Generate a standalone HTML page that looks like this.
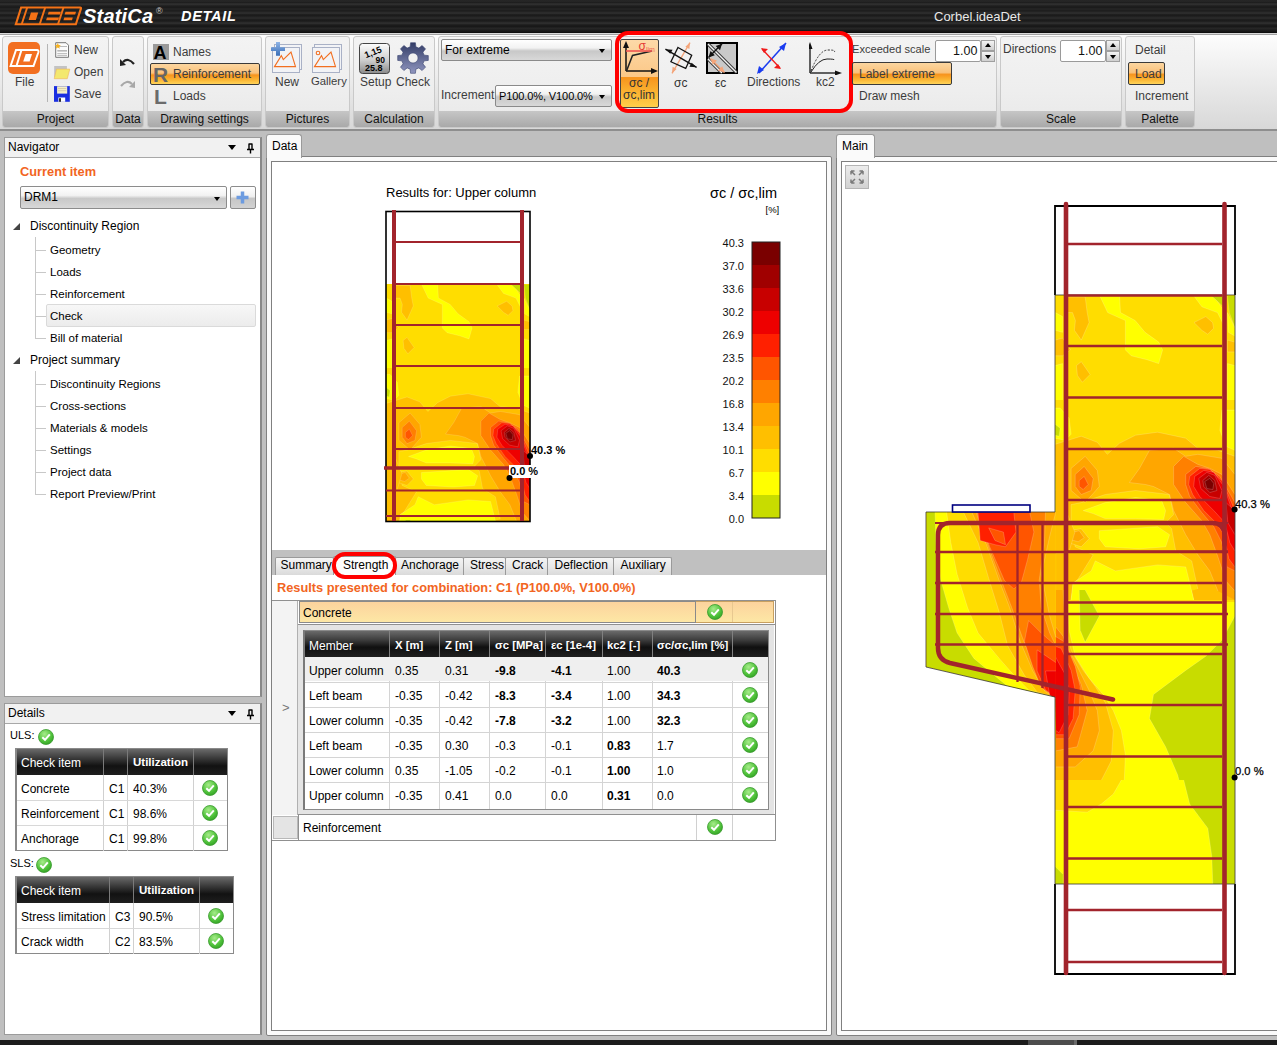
<!DOCTYPE html>
<html><head><meta charset="utf-8">
<style>
*{box-sizing:border-box;margin:0;padding:0}
html,body{width:1277px;height:1045px;overflow:hidden;background:#bfbfbf;font-family:"Liberation Sans",sans-serif;font-size:12px;color:#000}
.a{position:absolute}
.t{position:absolute;white-space:nowrap;line-height:1}
#title{left:0;top:0;width:1277px;height:33px;background:linear-gradient(180deg,#1d1d1d 0px,#2e2e2e 1px,#1b1b1b 2px,#222222 3px,#343434 4px,#1e1e1e 6px,#1a1a1a 8px,#2a2a2a 9px,#1c1c1c 10px,#242424 12px,#323232 13px,#181818 15px,#232323 17px,#2d2d2d 18px,#191919 20px,#222222 22px,#333333 23px,#1b1b1b 25px,#171717 27px,#282828 28px,#1d1d1d 30px,#121212 32px,#080808 33px)}
#ribbon{left:0;top:33px;width:1277px;height:98px;background:linear-gradient(180deg,#fdfdfd 0%,#f0f0f0 35%,#d8d8d8 100%);border-top:1px solid #d8d8d8;border-bottom:2px solid #8e8e8e}
.grp{position:absolute;top:2px;height:92px;border:1px solid #c9c9c9;border-radius:3px;background:linear-gradient(180deg,#f3f3f3 0%,#eeeeee 60%,#e8e8e8 100%);overflow:hidden}
.grp .lab{position:absolute;left:0;right:0;bottom:0;height:16px;background:linear-gradient(180deg,#c6c6c6,#a9a9a9);text-align:center;font-size:12px;line-height:16px;color:#111}
.rt{position:absolute;white-space:nowrap;font-size:12px;color:#3c3c3c;line-height:1}
.obtn{position:absolute;border:1px solid #3a3a3a;border-radius:2px;background:linear-gradient(180deg,#fcd6a0 0%,#f9c27c 45%,#f7941d 55%,#fbb634 80%,#ffd45a 100%)}
.combo{position:absolute;border:1px solid #8a8a8a;border-radius:2px;background:linear-gradient(180deg,#fff 0%,#f2f2f2 40%,#c8c8c8 55%,#d8d8d8 100%)}
.combo:after{content:"";position:absolute;right:6px;top:50%;margin-top:-1px;border-left:3.5px solid transparent;border-right:3.5px solid transparent;border-top:4px solid #000}
.spin{position:absolute;border:1px solid #9a9a9a;border-radius:2px;background:#fff}
.sbt{position:absolute;border:1px solid #a0a0a0;background:linear-gradient(180deg,#f4f4f4,#cfcfcf)}
</style></head><body>
<div id="title" class="a"></div>
<!-- logo -->
<svg class="a" style="left:10px;top:3px" width="80" height="27" viewBox="0 0 80 27"><g fill="#f47216">
<path d="M4.4 22.2 L10.4 3.6 H70.2 Q72.6 3.6 71.9 6.2 L66.6 22.2 Z M7.3 20.2 H65.1 L69.8 5.6 H11.9 Z"/>
<path d="M16.2 4.5 h2 l-5.6 17 h-2 z"/>
<path d="M34.2 4.5 h2 l-5.6 17 h-2 z"/>
<path d="M52.5 4.5 h2 l-5.6 17 h-2 z"/>
<path d="M21 9.4 H28.2 L25.9 16.9 H18.6 Z"/>
<path d="M38.7 8.7 H50.8 L50 11.5 H37.8 Z"/>
<path d="M37 14.4 H49 L48.2 17.2 H36.1 Z"/>
<path d="M55.5 8.7 H66 L65.2 11.5 H54.6 Z"/>
<path d="M54.3 14.4 H62.8 L62 17.2 H53.4 Z"/>
</g></svg>
<div class="t" style="left:83px;top:6px;font-size:20px;font-weight:bold;font-style:italic;color:#fff;letter-spacing:0.2px">StatiCa</div>
<div class="t" style="left:156px;top:7px;font-size:9px;color:#ccc">&#174;</div>
<div class="t" style="left:181px;top:9px;font-size:14.5px;font-weight:bold;font-style:italic;color:#fff;letter-spacing:0.7px">DETAIL</div>
<div class="t" style="left:934px;top:10px;font-size:13px;color:#e8e8e8">Corbel.ideaDet</div>

<div id="ribbon" class="a"><div class="a" style="left:0;top:0;width:1277px;height:1px;background:#a2a2a2"></div>
 <div class="grp" style="left:2px;width:107px"><div class="lab">Project</div></div>
 <div class="grp" style="left:112px;width:32px"><div class="lab">Data</div></div>
 <div class="grp" style="left:147px;width:115px"><div class="lab">Drawing settings</div></div>
 <div class="grp" style="left:265px;width:85px"><div class="lab">Pictures</div></div>
 <div class="grp" style="left:353px;width:82px"><div class="lab">Calculation</div></div>
 <div class="grp" style="left:438px;width:559px"><div class="lab">Results</div></div>
 <div class="grp" style="left:1000px;width:122px"><div class="lab">Scale</div></div>
 <div class="grp" style="left:1125px;width:70px"><div class="lab">Palette</div></div>
</div>
<!-- RIBBON CONTENT -->
<div id="rc">
 <!-- Project -->
 <svg class="a" style="left:8px;top:42px" width="32" height="32" viewBox="0 0 32 32"><rect x="0" y="0" width="32" height="32" rx="5" fill="#f26f21"/>
 <path d="M2.6 24 L8 8 H29 Q31 8 30.3 10.5 L25.5 24 Z" fill="none" stroke="#fff" stroke-width="2"/><path d="M13.3 8.5 L8.6 23.5" stroke="#fff" stroke-width="2"/><path d="M17.7 12.1 H24 L21.6 19.5 H15.2 Z" fill="#fff"/></svg>
 <div class="rt" style="left:15px;top:76px">File</div>
 <div class="a" style="left:47px;top:44px;width:1px;height:58px;background:#b5b5b5"></div>
 
 <svg class="a" style="left:48px;top:38px" width="25" height="66" viewBox="48 38 25 66">
 <path d="M55.7 42.7 H66 L68.5 45.2 V57.3 H55.7 Z" fill="#fbfbfb" stroke="#777" stroke-width="1"/>
 <path d="M57.3 46.5 H67 M57.3 53.6 H67 M57.3 55.4 H67" stroke="#aaa" stroke-width="0.8"/><path d="M57.3 50.8 H67" stroke="#b8b8b8" stroke-width="1.6"/>
 <path d="M57.8 43 l0.9 2 2.2 0.2 -1.7 1.4 0.6 2.2 -2 -1.2 -2 1.2 0.6 -2.2 -1.7 -1.4 2.2 -0.2z" fill="#f7b21f"/>
 <rect x="54.2" y="66" width="12.7" height="11" fill="#c3c3c3"/>
 <path d="M56.5 69.1 H69.8 L67.3 78.7 H54.2 Z" fill="#f3e86e" stroke="#f0b45a" stroke-width="0.6"/>
 <rect x="54" y="86.1" width="15.8" height="15.7" fill="#1a2ee0"/>
 <rect x="57.1" y="86.3" width="10.1" height="7.3" fill="#f5efc8"/><path d="M58 88.5 H66.3 M58 90.7 H66.3" stroke="#c8c0a0" stroke-width="0.7"/>
 <rect x="58.4" y="97.5" width="6.8" height="4.3" fill="#fff"/><rect x="59.2" y="98.2" width="1.6" height="3.6" fill="#000"/>
</svg>
 <div class="rt" style="left:74px;top:44px">New</div>
 
 <div class="rt" style="left:74px;top:66px">Open</div>
 
 <div class="rt" style="left:74px;top:88px">Save</div>
 <!-- Data -->
 <svg class="a" style="left:119px;top:55px" width="17" height="36" viewBox="0 0 17 36"><path d="M4 7 q5 -5 11 2" fill="none" stroke="#222" stroke-width="2.2"/><path d="M1 4 l0 7 6 -1z" fill="#222"/><path d="M13 29 q-5 -5 -11 2" fill="none" stroke="#a8a8a8" stroke-width="2.2"/><path d="M16 26 l0 7 -6 -1z" fill="#a8a8a8"/></svg>
 <!-- Drawing settings -->
 <div class="a" style="left:153px;top:44px;width:16px;height:16px;background:#9a9a9a"></div>
 <div class="t" style="left:153.5px;top:44px;font-size:18px;font-weight:bold;color:#000">A</div>
 <div class="rt" style="left:173px;top:46px">Names</div>
 <div class="obtn" style="left:150px;top:63px;width:110px;height:22px"></div>
 <div class="t" style="left:153px;top:64px;font-size:21px;font-weight:bold;color:#666">R</div>
 <div class="rt" style="left:173px;top:68px">Reinforcement</div>
 <div class="t" style="left:154px;top:86px;font-size:21px;font-weight:bold;color:#6b6b6b">L</div>
 <div class="rt" style="left:173px;top:90px">Loads</div>
 <!-- Pictures -->
 <svg class="a" style="left:265px;top:36px" width="85" height="40" viewBox="265 36 85 40">
 <g fill="#f2f3f6" stroke="#a9b1c6" stroke-width="1"><rect x="274.5" y="44.5" width="27" height="25"/><rect x="272.5" y="47.5" width="27" height="25"/><rect x="314.5" y="44.5" width="27" height="25"/><rect x="312.5" y="47.5" width="27" height="25"/></g>
 <g fill="none" stroke="#f26f21" stroke-width="1.1"><path d="M274.5 66.6 L281.3 55.6 L283.3 59.6 L291 52 L295.5 66.6 Z"/><path d="M314.5 66.6 L321.5 55.6 L323.3 59.6 L331 52 L335.5 66.6 Z"/><circle cx="318" cy="53" r="1.8"/></g>
 <defs><linearGradient id="pg" x1="0" y1="0" x2="0" y2="1"><stop offset="0" stop-color="#8fb4e6"/><stop offset="1" stop-color="#3a6fb8"/></linearGradient></defs>
 <path d="M276 42 h4 v5.3 h5 v3.6 h-5 v4.8 h-4 v-4.8 h-5 v-3.6 h5 z" fill="url(#pg)"/>
</svg>
 <div class="rt" style="left:275px;top:76px">New</div>
 
 <div class="rt" style="left:311px;top:76px;font-size:11.3px">Gallery</div>
 <!-- Calculation -->
 <svg class="a" style="left:359px;top:43px" width="31" height="31" viewBox="0 0 31 31"><defs><linearGradient id="sg" x1="0" y1="0" x2="0" y2="1"><stop offset="0" stop-color="#fdfdfd"/><stop offset="0.55" stop-color="#cfcfcf"/><stop offset="1" stop-color="#8a8a8a"/></linearGradient></defs><rect x="0.5" y="0.5" width="30" height="30" rx="3" fill="url(#sg)" stroke="#444"/>
 <g font-family="Liberation Sans" font-weight="bold" fill="#000"><text x="6" y="14" font-size="9" transform="rotate(-22 10 12)">1,15</text><text x="16.5" y="20" font-size="8.5">90</text><text x="6" y="28" font-size="9">25.8</text></g></svg>
 <div class="rt" style="left:360px;top:76px">Setup</div>
 <svg class="a" style="left:397px;top:42px" width="32" height="32" viewBox="-16 -16 32 32"><defs><linearGradient id="gg" x1="0" y1="0" x2="0" y2="1"><stop offset="0" stop-color="#323c66"/><stop offset="1" stop-color="#9096bf"/></linearGradient></defs>
 <path fill="url(#gg)" fill-rule="evenodd" stroke="#3a4470" stroke-width="0.6" stroke-linejoin="round" d="M11.14 -2.86 L15.31 -2.42 L15.31 2.42 L11.14 2.86 L9.90 5.85 L12.54 9.11 L9.11 12.54 L5.85 9.90 L2.86 11.14 L2.42 15.31 L-2.42 15.31 L-2.86 11.14 L-5.85 9.90 L-9.11 12.54 L-12.54 9.11 L-9.90 5.85 L-11.14 2.86 L-15.31 2.42 L-15.31 -2.42 L-11.14 -2.86 L-9.90 -5.85 L-12.54 -9.11 L-9.11 -12.54 L-5.85 -9.90 L-2.86 -11.14 L-2.42 -15.31 L2.42 -15.31 L2.86 -11.14 L5.85 -9.90 L9.11 -12.54 L12.54 -9.11 L9.90 -5.85 Z M0 -5 A5 5 0 1 0 0.01 -5 Z"/></svg>
 <div class="rt" style="left:396px;top:76px">Check</div>
 <!-- Results -->
 <div class="combo" style="left:441px;top:39px;width:171px;height:22px"></div>
 <div class="t" style="left:445px;top:44px;font-size:12px;color:#000">For extreme</div>
 <div class="rt" style="left:441px;top:89px">Increment</div>
 <div class="combo" style="left:495px;top:85px;width:117px;height:22px"></div>
 <div class="t" style="left:499px;top:91px;font-size:11px;letter-spacing:-0.1px;color:#000">P100.0%, V100.0%</div>
 <div class="obtn" style="left:620px;top:39px;width:39px;height:69px;background:linear-gradient(180deg,#fdd9a8 0%,#fbc887 55%,#f7941d 56%,#fbb634 80%,#ffd04a 100%);border-color:#444"></div>
 <svg class="a" style="left:620px;top:40px" width="39" height="38" viewBox="0 0 39 38"><path d="M6 31 V4" stroke="#111" stroke-width="1.5"/><path d="M3 8 L6 1 L9 8z" fill="#111"/><path d="M6 31 H34" stroke="#111" stroke-width="1.5"/><path d="M31 28 L38 31 L31 34z" fill="#111"/><path d="M6.5 31 L12.5 15.5 L32 11" fill="none" stroke="#222" stroke-width="1.5"/><path d="M6 11 H32" stroke="#ef5350" stroke-width="1.6"/><text x="18.5" y="9.5" font-family="Liberation Sans" font-size="12" fill="#e53935">σ</text><text x="26" y="12" font-family="Liberation Sans" font-size="7" fill="#ef6b5a">lim</text></svg>
 <div class="t" style="left:629px;top:77px;font-size:12px;color:#333">σc /</div>
 <div class="t" style="left:623px;top:89px;font-size:12px;color:#333">σc,lim</div>
 <svg class="a" style="left:664px;top:41px" width="34" height="34" viewBox="0 0 34 34"><path d="M8 32.3 L26 1.6" stroke="#f4a57a" stroke-width="1.3"/><path d="M26 1.6 l-0.6 6.5 -4 -2.3z M8 32.3 l0.6 -6.5 4 2.3z" fill="#f4a57a"/><path d="M1.4 8.2 L32.6 26.3" stroke="#111" stroke-width="1.4"/><path d="M1.4 8.2 l7.2 0.6 -2.3 4z M32.6 26.3 l-7.2 -0.6 2.3 -4z" fill="#111"/><path d="M14 6.5 L27.7 14.2 L21.7 27.4 L6.9 20.8z" fill="none" stroke="#111" stroke-width="1.3"/></svg>
 <div class="t" style="left:674px;top:77px;font-size:12px;color:#333">σc</div>
 <svg class="a" style="left:706px;top:42px" width="32" height="32" viewBox="0 0 32 32"><rect x="1" y="1" width="30" height="30" fill="#c9c9c9" stroke="#000" stroke-width="2"/><path d="M2 2 L30.5 30.5" stroke="#333" stroke-width="3.2"/><path d="M2 2 L30.5 30.5" stroke="#f2f2f2" stroke-width="1.4"/><path d="M2 17 L16 31" stroke="#333" stroke-width="3.2"/><path d="M2 17 L16 31" stroke="#f2f2f2" stroke-width="1.4"/><path d="M2.5 15.5 L16 1.8" stroke="#111" stroke-width="1.4"/><path d="M16 1.8 l-2 6.5 -4.3 -4.3z M2.5 15.5 l2 -6.5 4.3 4.3z" fill="#111"/><path d="M4.5 16.5 L18.5 30.5" stroke="#f4a57a" stroke-width="1.4"/><path d="M4.5 16.5 l6.5 2 -4.3 4.3z M18.5 30.5 l-6.5 -2 4.3 -4.3z" fill="#f4a57a"/></svg>
 <div class="t" style="left:715px;top:77px;font-size:12px;color:#333">εc</div>
 <svg class="a" style="left:756px;top:42px" width="34" height="32" viewBox="0 0 34 32"><path d="M3 31 L30 1" stroke="#1a3cf0" stroke-width="1.6"/><path d="M30 1 l-2 8 -5 -4z M1 32 l2 -8 5 4z" fill="#1a3cf0"/><path d="M6 7 L24 26" stroke="#f01a1a" stroke-width="1.3"/><path d="M5 6 l7 1 -4 4z M25 27 l-7 -1 4 -4z" fill="#f01a1a"/></svg>
 <div class="rt" style="left:747px;top:76px">Directions</div>
 <svg class="a" style="left:809px;top:42px" width="33" height="33" viewBox="0 0 33 33"><path d="M1 31 V3" stroke="#111" stroke-width="1.3"/><path d="M-1.5 7 L1 0 L3.5 7z" fill="#111"/><path d="M1 31 H30" stroke="#111" stroke-width="1.3"/><path d="M26 28.5 L33 31 L26 33.5z" fill="#111"/><path d="M2 30 Q10 17 18 17 T25 18" fill="none" stroke="#222" stroke-width="1"/><path d="M2 29 Q10 8 19 8 T25 10" fill="none" stroke="#333" stroke-width="1" stroke-dasharray="2 1.5"/></svg>
 <div class="rt" style="left:816px;top:76px">kc2</div>
 <div class="a" style="left:615px;top:31px;width:238px;height:82px;border:4px solid #f00;border-radius:13px"></div>
 <div class="rt" style="left:852px;top:44px;font-size:11.1px">Exceeded scale</div>
 <div class="spin" style="left:935px;top:40px;width:46px;height:22px"></div>
 <div class="t" style="left:953px;top:44.5px;font-size:12.5px;color:#111">1.00</div>
 <div class="sbt" style="left:981px;top:40px;width:14px;height:11px"></div><div class="sbt" style="left:981px;top:51px;width:14px;height:11px"></div>
 <div class="a" style="left:985px;top:43px;border-left:3px solid transparent;border-right:3px solid transparent;border-bottom:4px solid #000"></div>
 <div class="a" style="left:985px;top:55px;border-left:3px solid transparent;border-right:3px solid transparent;border-top:4px solid #000"></div>
 <div class="obtn" style="left:852px;top:62px;width:100px;height:23px"></div>
 <div class="rt" style="left:859px;top:68px">Label extreme</div>
 <div class="rt" style="left:859px;top:90px">Draw mesh</div>
 <!-- Scale -->
 <div class="rt" style="left:1003px;top:43px">Directions</div>
 <div class="spin" style="left:1060px;top:40px;width:46px;height:22px"></div>
 <div class="t" style="left:1078px;top:44.5px;font-size:12.5px;color:#111">1.00</div>
 <div class="sbt" style="left:1106px;top:40px;width:14px;height:11px"></div><div class="sbt" style="left:1106px;top:51px;width:14px;height:11px"></div>
 <div class="a" style="left:1110px;top:43px;border-left:3px solid transparent;border-right:3px solid transparent;border-bottom:4px solid #000"></div>
 <div class="a" style="left:1110px;top:55px;border-left:3px solid transparent;border-right:3px solid transparent;border-top:4px solid #000"></div>
 <!-- Palette -->
 <div class="rt" style="left:1135px;top:44px">Detail</div>
 <div class="obtn" style="left:1128px;top:62px;width:37px;height:23px"></div>
 <div class="rt" style="left:1135px;top:68px">Load</div>
 <div class="rt" style="left:1135px;top:90px">Increment</div>
</div>
<!-- LEFT PANELS -->
<svg width="0" height="0" style="position:absolute"><defs>
<radialGradient id="cg" cx="0.4" cy="0.3" r="0.8"><stop offset="0" stop-color="#a6ec8a"/><stop offset="0.6" stop-color="#4fc23a"/><stop offset="1" stop-color="#2e9a22"/></radialGradient>
<g id="chk"><circle cx="8" cy="8" r="7.5" fill="url(#cg)" stroke="#3a9a2e" stroke-width=".8"/><path d="M4.3 8.3 L7 10.8 L11.8 5.3" fill="none" stroke="#fff" stroke-width="2"/></g>
</defs></svg><div id="lp">
 <div class="a" style="left:4px;top:137px;width:258px;height:560px;background:#fff;border:1px solid #9b9b9b;border-right:2px solid #888"></div>
 <div class="a" style="left:5px;top:138px;width:255px;height:20px;background:#f1f1f1;border-bottom:1px solid #a8a8a8"></div>
 <div class="t" style="left:8px;top:141px;font-size:12px">Navigator</div>
 <div class="a" style="left:228px;top:145px;border-left:4px solid transparent;border-right:4px solid transparent;border-top:5px solid #000"></div>
 <svg class="a" style="left:246px;top:143px" width="9" height="11" viewBox="0 0 9 11"><path d="M2.5 1 h4 M3 1 v5 M6 1 v5 M1 6.5 h7 M4.5 6.5 v4" stroke="#000" stroke-width="1.4" fill="none"/></svg>
 <div class="t" style="left:20px;top:166px;font-size:12.8px;font-weight:bold;color:#f26522">Current item</div>
 <div class="combo" style="left:20px;top:186px;width:207px;height:23px;border-color:#8c8c8c"></div>
 <div class="t" style="left:24px;top:191px;font-size:12px">DRM1</div>
 <div class="a" style="left:230px;top:186px;width:26px;height:23px;border:1px solid #8c8c8c;border-radius:2px;background:linear-gradient(180deg,#fff 0%,#f0f0f0 45%,#c6c6c6 55%,#d2d2d2 100%)"></div>
 <svg class="a" style="left:236px;top:191px" width="13" height="13" viewBox="0 0 13 13"><path d="M6.5 0.5 v12 M0.5 6.5 h12" stroke="#6c9be0" stroke-width="3.5"/></svg>
 <div class="a" style="left:13px;top:223px;width:0;height:0;border-left:7px solid transparent;border-bottom:7px solid #444"></div>
 <div class="t" style="left:30px;top:220px;font-size:12px">Discontinuity Region</div>
 <div class="a" style="left:35px;top:237px;width:1px;height:102px;background:#c8c8c8"></div>
 <div class="a" style="left:46px;top:304px;width:210px;height:23px;background:linear-gradient(180deg,#f7f7f7,#ececec);border:1px solid #dadada;border-radius:2px"></div>
<div class="a" style="left:35px;top:250px;width:11px;height:1px;background:#c8c8c8"></div>
<div class="t" style="left:50px;top:245px;font-size:11.5px">Geometry</div>
<div class="a" style="left:35px;top:272px;width:11px;height:1px;background:#c8c8c8"></div>
<div class="t" style="left:50px;top:267px;font-size:11.5px">Loads</div>
<div class="a" style="left:35px;top:294px;width:11px;height:1px;background:#c8c8c8"></div>
<div class="t" style="left:50px;top:289px;font-size:11.5px">Reinforcement</div>
<div class="a" style="left:35px;top:316px;width:11px;height:1px;background:#c8c8c8"></div>
<div class="t" style="left:50px;top:311px;font-size:11.5px">Check</div>
<div class="a" style="left:35px;top:338px;width:11px;height:1px;background:#c8c8c8"></div>
<div class="t" style="left:50px;top:333px;font-size:11.5px">Bill of material</div>
 <div class="a" style="left:13px;top:357px;width:0;height:0;border-left:7px solid transparent;border-bottom:7px solid #444"></div>
 <div class="t" style="left:30px;top:354px;font-size:12px">Project summary</div>
 <div class="a" style="left:35px;top:371px;width:1px;height:124px;background:#c8c8c8"></div>
<div class="a" style="left:35px;top:384px;width:11px;height:1px;background:#c8c8c8"></div>
<div class="t" style="left:50px;top:379px;font-size:11.5px">Discontinuity Regions</div>
<div class="a" style="left:35px;top:406px;width:11px;height:1px;background:#c8c8c8"></div>
<div class="t" style="left:50px;top:401px;font-size:11.5px">Cross-sections</div>
<div class="a" style="left:35px;top:428px;width:11px;height:1px;background:#c8c8c8"></div>
<div class="t" style="left:50px;top:423px;font-size:11.5px">Materials &amp; models</div>
<div class="a" style="left:35px;top:450px;width:11px;height:1px;background:#c8c8c8"></div>
<div class="t" style="left:50px;top:445px;font-size:11.5px">Settings</div>
<div class="a" style="left:35px;top:472px;width:11px;height:1px;background:#c8c8c8"></div>
<div class="t" style="left:50px;top:467px;font-size:11.5px">Project data</div>
<div class="a" style="left:35px;top:494px;width:11px;height:1px;background:#c8c8c8"></div>
<div class="t" style="left:50px;top:489px;font-size:11.5px">Report Preview/Print</div>
 <!-- Details -->
 <div class="a" style="left:4px;top:703px;width:258px;height:332px;background:#fff;border:1px solid #9b9b9b;border-right:2px solid #888"></div>
 <div class="a" style="left:5px;top:704px;width:255px;height:20px;background:#f1f1f1;border-bottom:1px solid #a8a8a8"></div>
 <div class="t" style="left:8px;top:707px;font-size:12px">Details</div>
 <div class="a" style="left:228px;top:711px;border-left:4px solid transparent;border-right:4px solid transparent;border-top:5px solid #000"></div>
 <svg class="a" style="left:246px;top:709px" width="9" height="11" viewBox="0 0 9 11"><path d="M2.5 1 h4 M3 1 v5 M6 1 v5 M1 6.5 h7 M4.5 6.5 v4" stroke="#000" stroke-width="1.4" fill="none"/></svg>
 <div class="t" style="left:10px;top:730px;font-size:11px">ULS:</div>
 <svg class="a ck" style="left:38px;top:729px" width="16" height="16"><use href="#chk"/></svg>
 <div class="a" style="left:15px;top:748px;width:213px;height:103px;border:1px solid #8a8a8a;border-left:2px solid #8a8a8a;background:#fff"></div>
 <div class="a" style="left:17px;top:749px;width:210px;height:26px;background:linear-gradient(180deg,#6a6a6a 0%,#3a3a3a 35%,#121212 65%,#1e1e1e 100%)"></div>
 <div class="a" style="left:103px;top:749px;width:1px;height:102px;background:#d0d0d0"></div>
 <div class="a" style="left:103px;top:749px;width:1px;height:26px;background:#7a7a7a"></div>
 <div class="a" style="left:127px;top:749px;width:1px;height:102px;background:#d0d0d0"></div>
 <div class="a" style="left:127px;top:749px;width:1px;height:26px;background:#7a7a7a"></div>
 <div class="a" style="left:193px;top:749px;width:1px;height:102px;background:#d0d0d0"></div>
 <div class="a" style="left:193px;top:749px;width:1px;height:26px;background:#7a7a7a"></div>
 <div class="a" style="left:17px;top:800px;width:210px;height:1px;background:#d8d8d8"></div>
 <div class="a" style="left:17px;top:825px;width:210px;height:1px;background:#d8d8d8"></div>
 <div class="t" style="left:21px;top:757px;font-size:12px;color:#fff">Check item</div>
 <div class="t" style="left:133px;top:757px;font-size:11.5px;color:#fff;font-weight:bold">Utilization</div>
 <div class="t" style="left:21px;top:782.5px;font-size:12px">Concrete</div>
 <div class="t" style="left:109px;top:782.5px;font-size:12px">C1</div>
 <div class="t" style="left:133px;top:782.5px;font-size:12px">40.3%</div>
 <svg class="a" style="left:202px;top:779.5px" width="16" height="16"><use href="#chk"/></svg>
 <div class="t" style="left:21px;top:807.5px;font-size:12px">Reinforcement</div>
 <div class="t" style="left:109px;top:807.5px;font-size:12px">C1</div>
 <div class="t" style="left:133px;top:807.5px;font-size:12px">98.6%</div>
 <svg class="a" style="left:202px;top:804.5px" width="16" height="16"><use href="#chk"/></svg>
 <div class="t" style="left:21px;top:832.5px;font-size:12px">Anchorage</div>
 <div class="t" style="left:109px;top:832.5px;font-size:12px">C1</div>
 <div class="t" style="left:133px;top:832.5px;font-size:12px">99.8%</div>
 <svg class="a" style="left:202px;top:829.5px" width="16" height="16"><use href="#chk"/></svg>
 <div class="t" style="left:10px;top:858px;font-size:11px">SLS:</div>
 <svg class="a ck" style="left:36px;top:857px" width="16" height="16"><use href="#chk"/></svg>
 <div class="a" style="left:15px;top:876px;width:219px;height:78px;border:1px solid #8a8a8a;border-left:2px solid #8a8a8a;background:#fff"></div>
 <div class="a" style="left:17px;top:877px;width:216px;height:26px;background:linear-gradient(180deg,#6a6a6a 0%,#3a3a3a 35%,#121212 65%,#1e1e1e 100%)"></div>
 <div class="a" style="left:109px;top:877px;width:1px;height:77px;background:#d0d0d0"></div>
 <div class="a" style="left:109px;top:877px;width:1px;height:26px;background:#7a7a7a"></div>
 <div class="a" style="left:133px;top:877px;width:1px;height:77px;background:#d0d0d0"></div>
 <div class="a" style="left:133px;top:877px;width:1px;height:26px;background:#7a7a7a"></div>
 <div class="a" style="left:199px;top:877px;width:1px;height:77px;background:#d0d0d0"></div>
 <div class="a" style="left:199px;top:877px;width:1px;height:26px;background:#7a7a7a"></div>
 <div class="a" style="left:17px;top:928px;width:216px;height:1px;background:#d8d8d8"></div>
 <div class="t" style="left:21px;top:885px;font-size:12px;color:#fff">Check item</div>
 <div class="t" style="left:139px;top:885px;font-size:11.5px;color:#fff;font-weight:bold">Utilization</div>
 <div class="t" style="left:21px;top:910.5px;font-size:12px">Stress limitation</div>
 <div class="t" style="left:115px;top:910.5px;font-size:12px">C3</div>
 <div class="t" style="left:139px;top:910.5px;font-size:12px">90.5%</div>
 <svg class="a" style="left:208px;top:907.5px" width="16" height="16"><use href="#chk"/></svg>
 <div class="t" style="left:21px;top:935.5px;font-size:12px">Crack width</div>
 <div class="t" style="left:115px;top:935.5px;font-size:12px">C2</div>
 <div class="t" style="left:139px;top:935.5px;font-size:12px">83.5%</div>
 <svg class="a" style="left:208px;top:932.5px" width="16" height="16"><use href="#chk"/></svg>
</div>
<!-- MIDDLE -->
<div id="mp">
 <div class="a" style="left:266px;top:156px;width:566px;height:880px;border:1px solid #808080;border-radius:2px;background:#fafafa"></div>
 <div class="a" style="left:266px;top:134px;width:36px;height:24px;border:1px solid #9a9a9a;border-bottom:none;border-radius:3px 3px 0 0;background:#fafafa"></div>
 <div class="t" style="left:272px;top:140px;font-size:12px">Data</div>
 <div class="a" style="left:271px;top:161px;width:556px;height:870px;border:1px solid #808080;background:#fff"></div>
 <svg class="a" style="left:0;top:0" width="830" height="550" viewBox="0 0 830 550">
  <text x="386" y="197" font-family="Liberation Sans" font-size="13" fill="#000">Results for: Upper column</text>
  <text x="710" y="198" font-family="Liberation Sans" font-size="14.5" fill="#000">σc / σc,lim</text>
  <text x="765.5" y="213" font-family="Liberation Sans" font-size="9.5" fill="#000">[%]</text>
  <rect x="752" y="242" width="28" height="23" fill="#7a0000"/><rect x="752" y="265" width="28" height="23" fill="#a00000"/><rect x="752" y="288" width="28" height="23" fill="#c80000"/><rect x="752" y="311" width="28" height="23" fill="#ee0000"/><rect x="752" y="334" width="28" height="23" fill="#ff2000"/><rect x="752" y="357" width="28" height="23" fill="#ff5500"/><rect x="752" y="380" width="28" height="23" fill="#ff8000"/><rect x="752" y="403" width="28" height="23" fill="#ffa600"/><rect x="752" y="426" width="28" height="23" fill="#ffbf00"/><rect x="752" y="449" width="28" height="23" fill="#ffdd00"/><rect x="752" y="472" width="28" height="23" fill="#ffff00"/><rect x="752" y="495" width="28" height="23" fill="#c8dc00"/><rect x="752" y="242" width="28" height="276" fill="none" stroke="#222" stroke-width="1"/><text x="744" y="247" text-anchor="end" font-family="Liberation Sans" font-size="11" fill="#111">40.3</text><text x="744" y="270" text-anchor="end" font-family="Liberation Sans" font-size="11" fill="#111">37.0</text><text x="744" y="293" text-anchor="end" font-family="Liberation Sans" font-size="11" fill="#111">33.6</text><text x="744" y="316" text-anchor="end" font-family="Liberation Sans" font-size="11" fill="#111">30.2</text><text x="744" y="339" text-anchor="end" font-family="Liberation Sans" font-size="11" fill="#111">26.9</text><text x="744" y="362" text-anchor="end" font-family="Liberation Sans" font-size="11" fill="#111">23.5</text><text x="744" y="385" text-anchor="end" font-family="Liberation Sans" font-size="11" fill="#111">20.2</text><text x="744" y="408" text-anchor="end" font-family="Liberation Sans" font-size="11" fill="#111">16.8</text><text x="744" y="431" text-anchor="end" font-family="Liberation Sans" font-size="11" fill="#111">13.4</text><text x="744" y="454" text-anchor="end" font-family="Liberation Sans" font-size="11" fill="#111">10.1</text><text x="744" y="477" text-anchor="end" font-family="Liberation Sans" font-size="11" fill="#111">6.7</text><text x="744" y="500" text-anchor="end" font-family="Liberation Sans" font-size="11" fill="#111">3.4</text><text x="744" y="523" text-anchor="end" font-family="Liberation Sans" font-size="11" fill="#111">0.0</text>
  
  <defs><clipPath id="mclip"><rect x="386" y="284" width="144" height="237"/></clipPath></defs>
  <g clip-path="url(#mclip)">
   <rect x="386" y="284" width="144" height="237" fill="#ffdd00"/>
   <g transform="translate(386,284) scale(0.8) translate(-1055,-295)"><use href="#contourR"/></g>
  </g>
  <rect x="386" y="211.5" width="144" height="310" fill="none" stroke="#000" stroke-width="1.6"/>
  <g stroke="#a2242c">
   <path d="M396 242 H520 M396 284 H520 M396 325 H520 M396 366 H520 M396 408 H520 M396 449 H520 M386 490.5 H520 M386 516 H520" stroke-width="2.2"/>
   <path d="M384 468 H509" stroke-width="3.6"/>
   <path d="M394 210 V521 M522 210 V521" stroke-width="4"/>
  </g>
  <circle cx="530" cy="456" r="3" fill="#000"/>
  <text x="531" y="454" font-family="Liberation Sans" font-size="11" font-weight="bold" fill="#000">40.3 %</text>
  <rect x="509" y="465" width="28" height="13" fill="#fff"/>
  <circle cx="509.5" cy="478" r="3" fill="#000"/>
  <text x="510" y="475" font-family="Liberation Sans" font-size="11" font-weight="bold" fill="#000">0.0 %</text>

 </svg>
 <!-- tab band -->
 <div class="a" style="left:272px;top:550px;width:554px;height:25px;background:#c0c0c0"></div>
 <div class="a" style="left:275px;top:557px;width:59px;height:18px;border:1px solid #9a9a9a;border-bottom:none;border-radius:2px 2px 0 0;background:linear-gradient(180deg,#f4f4f4 0%,#e9e9e9 50%,#dadada 100%)"></div>
 <div class="t" style="left:280.5px;top:559px;font-size:12px">Summary</div>
 <div class="a" style="left:333px;top:556px;width:63px;height:19px;border:1px solid #9a9a9a;border-bottom:none;border-radius:2px 2px 0 0;background:#fdfdfd"></div>
 <div class="t" style="left:343px;top:559px;font-size:12px">Strength</div>
 <div class="a" style="left:395px;top:557px;width:69px;height:18px;border:1px solid #9a9a9a;border-bottom:none;border-radius:2px 2px 0 0;background:linear-gradient(180deg,#f4f4f4 0%,#e9e9e9 50%,#dadada 100%)"></div>
 <div class="t" style="left:401px;top:559px;font-size:12px">Anchorage</div>
 <div class="a" style="left:463px;top:557px;width:43px;height:18px;border:1px solid #9a9a9a;border-bottom:none;border-radius:2px 2px 0 0;background:linear-gradient(180deg,#f4f4f4 0%,#e9e9e9 50%,#dadada 100%)"></div>
 <div class="t" style="left:470px;top:559px;font-size:12px">Stress</div>
 <div class="a" style="left:505px;top:557px;width:43px;height:18px;border:1px solid #9a9a9a;border-bottom:none;border-radius:2px 2px 0 0;background:linear-gradient(180deg,#f4f4f4 0%,#e9e9e9 50%,#dadada 100%)"></div>
 <div class="t" style="left:512px;top:559px;font-size:12px">Crack</div>
 <div class="a" style="left:547px;top:557px;width:67px;height:18px;border:1px solid #9a9a9a;border-bottom:none;border-radius:2px 2px 0 0;background:linear-gradient(180deg,#f4f4f4 0%,#e9e9e9 50%,#dadada 100%)"></div>
 <div class="t" style="left:554.5px;top:559px;font-size:12px">Deflection</div>
 <div class="a" style="left:613px;top:557px;width:59px;height:18px;border:1px solid #9a9a9a;border-bottom:none;border-radius:2px 2px 0 0;background:linear-gradient(180deg,#f4f4f4 0%,#e9e9e9 50%,#dadada 100%)"></div>
 <div class="t" style="left:620.5px;top:559px;font-size:12px">Auxiliary</div>
 <div class="a" style="left:332px;top:552px;width:65px;height:27px;border:4px solid #f00;border-radius:13px"></div>
 <div class="t" style="left:277px;top:582px;font-size:12.8px;font-weight:bold;color:#f26522">Results presented for combination: C1 (P100.0%, V100.0%)</div>
 <div class="a" style="left:272px;top:600px;width:504px;height:241px;border:1px solid #909090;border-left:none;background:#fff"></div>
 <div class="a" style="left:272px;top:601px;width:26px;height:214px;background:#f3f3f3;border-right:1px solid #b0b0b0"></div>
 <div class="a" style="left:273px;top:816px;width:25px;height:23px;background:#e4e4e4;border:1px solid #b8b8b8"></div>
 <div class="t" style="left:282px;top:701px;font-size:13px;color:#777">&gt;</div>
 <div class="a" style="left:299px;top:601px;width:475px;height:22px;border:1px solid #c8a060;background:linear-gradient(180deg,#fcd39d,#fde7a5)"></div>
 <div class="a" style="left:299px;top:601px;width:397px;height:22px;border:1px solid #8a8a8a;border-right:1px solid #8a8a8a"></div>
 <div class="a" style="left:732px;top:602px;width:1px;height:20px;background:#e8c890"></div>
 <div class="t" style="left:303px;top:607px;font-size:12px">Concrete</div>
 <svg class="a" style="left:707px;top:604px" width="16" height="16"><use href="#chk"/></svg>
 <div class="a" style="left:298px;top:624px;width:477px;height:1px;background:#909090"></div>
 <div class="a" style="left:298px;top:625px;width:476px;height:189px;background:#e4e4e4"></div>
 <div class="a" style="left:298px;top:814px;width:477px;height:1px;background:#909090"></div>
 <div class="a" style="left:303px;top:630px;width:466px;height:180px;border:1px solid #8a8a8a;border-left:2px solid #7a7a7a;background:#fff"></div>
 <div class="a" style="left:305px;top:631px;width:463px;height:26px;background:linear-gradient(180deg,#6a6a6a 0%,#3c3c3c 35%,#101010 62%,#1e1e1e 100%)"></div>
 <div class="a" style="left:389px;top:631px;width:1px;height:178px;background:#d4d4d4"></div>
 <div class="a" style="left:389px;top:631px;width:1px;height:26px;background:#808080"></div>
 <div class="a" style="left:439px;top:631px;width:1px;height:178px;background:#d4d4d4"></div>
 <div class="a" style="left:439px;top:631px;width:1px;height:26px;background:#808080"></div>
 <div class="a" style="left:489px;top:631px;width:1px;height:178px;background:#d4d4d4"></div>
 <div class="a" style="left:489px;top:631px;width:1px;height:26px;background:#808080"></div>
 <div class="a" style="left:545px;top:631px;width:1px;height:178px;background:#d4d4d4"></div>
 <div class="a" style="left:545px;top:631px;width:1px;height:26px;background:#808080"></div>
 <div class="a" style="left:602px;top:631px;width:1px;height:178px;background:#d4d4d4"></div>
 <div class="a" style="left:602px;top:631px;width:1px;height:26px;background:#808080"></div>
 <div class="a" style="left:652px;top:631px;width:1px;height:178px;background:#d4d4d4"></div>
 <div class="a" style="left:652px;top:631px;width:1px;height:26px;background:#808080"></div>
 <div class="a" style="left:732px;top:631px;width:1px;height:178px;background:#d4d4d4"></div>
 <div class="a" style="left:732px;top:631px;width:1px;height:26px;background:#808080"></div>
 <div class="a" style="left:305px;top:657px;width:463px;height:24px;background:#efefef"></div>
 <div class="a" style="left:305px;top:682px;width:463px;height:1px;background:#d4d4d4"></div>
 <div class="a" style="left:305px;top:707px;width:463px;height:1px;background:#d4d4d4"></div>
 <div class="a" style="left:305px;top:732px;width:463px;height:1px;background:#d4d4d4"></div>
 <div class="a" style="left:305px;top:757px;width:463px;height:1px;background:#d4d4d4"></div>
 <div class="a" style="left:305px;top:782px;width:463px;height:1px;background:#d4d4d4"></div>
 <div class="t" style="left:309px;top:640px;font-size:12px;color:#fff;">Member</div>
 <div class="t" style="left:395px;top:640px;font-size:11.3px;color:#fff;font-weight:bold">X [m]</div>
 <div class="t" style="left:445px;top:640px;font-size:11.3px;color:#fff;font-weight:bold">Z [m]</div>
 <div class="t" style="left:495px;top:640px;font-size:11.3px;color:#fff;font-weight:bold">σc [MPa]</div>
 <div class="t" style="left:551px;top:640px;font-size:11.3px;color:#fff;font-weight:bold">εc [1e-4]</div>
 <div class="t" style="left:607px;top:640px;font-size:11.3px;color:#fff;font-weight:bold">kc2 [-]</div>
 <div class="t" style="left:657px;top:640px;font-size:11.3px;color:#fff;font-weight:bold">σc/σc,lim [%]</div>
 <div class="t" style="left:309px;top:664.5px;font-size:12px;">Upper column</div>
 <div class="t" style="left:395px;top:664.5px;font-size:12px;">0.35</div>
 <div class="t" style="left:445px;top:664.5px;font-size:12px;">0.31</div>
 <div class="t" style="left:495px;top:664.5px;font-size:12px;font-weight:bold">-9.8</div>
 <div class="t" style="left:551px;top:664.5px;font-size:12px;font-weight:bold">-4.1</div>
 <div class="t" style="left:607px;top:664.5px;font-size:12px;">1.00</div>
 <div class="t" style="left:657px;top:664.5px;font-size:12px;font-weight:bold">40.3</div>
 <svg class="a" style="left:742px;top:661.5px" width="16" height="16"><use href="#chk"/></svg>
 <div class="t" style="left:309px;top:689.5px;font-size:12px;">Left beam</div>
 <div class="t" style="left:395px;top:689.5px;font-size:12px;">-0.35</div>
 <div class="t" style="left:445px;top:689.5px;font-size:12px;">-0.42</div>
 <div class="t" style="left:495px;top:689.5px;font-size:12px;font-weight:bold">-8.3</div>
 <div class="t" style="left:551px;top:689.5px;font-size:12px;font-weight:bold">-3.4</div>
 <div class="t" style="left:607px;top:689.5px;font-size:12px;">1.00</div>
 <div class="t" style="left:657px;top:689.5px;font-size:12px;font-weight:bold">34.3</div>
 <svg class="a" style="left:742px;top:686.5px" width="16" height="16"><use href="#chk"/></svg>
 <div class="t" style="left:309px;top:714.5px;font-size:12px;">Lower column</div>
 <div class="t" style="left:395px;top:714.5px;font-size:12px;">-0.35</div>
 <div class="t" style="left:445px;top:714.5px;font-size:12px;">-0.42</div>
 <div class="t" style="left:495px;top:714.5px;font-size:12px;font-weight:bold">-7.8</div>
 <div class="t" style="left:551px;top:714.5px;font-size:12px;font-weight:bold">-3.2</div>
 <div class="t" style="left:607px;top:714.5px;font-size:12px;">1.00</div>
 <div class="t" style="left:657px;top:714.5px;font-size:12px;font-weight:bold">32.3</div>
 <svg class="a" style="left:742px;top:711.5px" width="16" height="16"><use href="#chk"/></svg>
 <div class="t" style="left:309px;top:739.5px;font-size:12px;">Left beam</div>
 <div class="t" style="left:395px;top:739.5px;font-size:12px;">-0.35</div>
 <div class="t" style="left:445px;top:739.5px;font-size:12px;">0.30</div>
 <div class="t" style="left:495px;top:739.5px;font-size:12px;">-0.3</div>
 <div class="t" style="left:551px;top:739.5px;font-size:12px;">-0.1</div>
 <div class="t" style="left:607px;top:739.5px;font-size:12px;font-weight:bold">0.83</div>
 <div class="t" style="left:657px;top:739.5px;font-size:12px;">1.7</div>
 <svg class="a" style="left:742px;top:736.5px" width="16" height="16"><use href="#chk"/></svg>
 <div class="t" style="left:309px;top:764.5px;font-size:12px;">Lower column</div>
 <div class="t" style="left:395px;top:764.5px;font-size:12px;">0.35</div>
 <div class="t" style="left:445px;top:764.5px;font-size:12px;">-1.05</div>
 <div class="t" style="left:495px;top:764.5px;font-size:12px;">-0.2</div>
 <div class="t" style="left:551px;top:764.5px;font-size:12px;">-0.1</div>
 <div class="t" style="left:607px;top:764.5px;font-size:12px;font-weight:bold">1.00</div>
 <div class="t" style="left:657px;top:764.5px;font-size:12px;">1.0</div>
 <svg class="a" style="left:742px;top:761.5px" width="16" height="16"><use href="#chk"/></svg>
 <div class="t" style="left:309px;top:789.5px;font-size:12px;">Upper column</div>
 <div class="t" style="left:395px;top:789.5px;font-size:12px;">-0.35</div>
 <div class="t" style="left:445px;top:789.5px;font-size:12px;">0.41</div>
 <div class="t" style="left:495px;top:789.5px;font-size:12px;">0.0</div>
 <div class="t" style="left:551px;top:789.5px;font-size:12px;">0.0</div>
 <div class="t" style="left:607px;top:789.5px;font-size:12px;font-weight:bold">0.31</div>
 <div class="t" style="left:657px;top:789.5px;font-size:12px;">0.0</div>
 <svg class="a" style="left:742px;top:786.5px" width="16" height="16"><use href="#chk"/></svg>
 <div class="a" style="left:298px;top:815px;width:1px;height:25px;background:#909090"></div>
 <div class="a" style="left:696px;top:815px;width:1px;height:25px;background:#d0d0d0"></div>
 <div class="a" style="left:732px;top:815px;width:1px;height:25px;background:#d0d0d0"></div>
 <div class="t" style="left:303px;top:822px;font-size:12px">Reinforcement</div>
 <svg class="a" style="left:707px;top:819px" width="16" height="16"><use href="#chk"/></svg>
</div>
<!-- RIGHT -->
<div id="rp">
 <div class="a" style="left:836px;top:156px;width:460px;height:880px;border:1px solid #808080;border-radius:2px;background:#fafafa"></div>
 <div class="a" style="left:836px;top:134px;width:39px;height:24px;border:1px solid #9a9a9a;border-bottom:none;border-radius:3px 3px 0 0;background:#fafafa"></div>
 <div class="t" style="left:842px;top:140px;font-size:12px">Main</div>
 <div class="a" style="left:841px;top:161px;width:450px;height:870px;border:1px solid #808080;background:#fff"></div>
 <div class="a" style="left:845px;top:165px;width:24px;height:24px;border:1px solid #b4b4b4;background:linear-gradient(180deg,#ececec,#d2d2d2)"></div>
 <svg class="a" style="left:845px;top:165px" width="24" height="24" viewBox="0 0 24 24"><g stroke="#7a7a7a" stroke-width="1.5" fill="none"><path d="M6 6 L10 10 M6 6 h3.5 M6 6 v3.5"/><path d="M18 6 L14 10 M18 6 h-3.5 M18 6 v3.5"/><path d="M6 18 L10 14 M6 18 h3.5 M6 18 v-3.5"/><path d="M18 18 L14 14 M18 18 h-3.5 M18 18 v-3.5"/></g></svg>
 <svg class="a" style="left:0;top:0" width="1277" height="1045" viewBox="0 0 1277 1045">
  <defs><g id="contourR">
<polygon points="1055.0,295.0 1235.0,295.0 1235.0,884.0 1055.0,884.0 1055.0,697.0 926.0,667.0 926.0,512.0 1055.0,512.0" fill="#ffdd00"/>
<polygon points="1064.6,297.0 1085.2,297.0 1087.2,312.6 1089.1,322.5 1081.3,340.1 1074.4,330.3 1075.4,320.5 1072.5,312.6 1064.6,312.6" fill="#ffbf00"/>
<path d="M1064.6 297.0L1085.2 297.0M1085.2 297.0L1087.2 312.6M1087.2 312.6L1089.1 322.5M1089.1 322.5L1081.3 340.1M1081.3 340.1L1074.4 330.3M1074.4 330.3L1075.4 320.5M1075.4 320.5L1072.5 312.6M1072.5 312.6L1064.6 312.6M1064.6 312.6L1064.6 297.0" fill="none" stroke="#fff" stroke-opacity="0.3" stroke-width="0.6"/>
<polygon points="1099.9,296.0 1119.5,296.0 1120.5,312.6 1135.2,320.5 1145.0,332.3 1158.7,342.1 1162.6,349.9 1158.7,363.6 1147.0,359.7 1131.3,355.8 1125.4,349.9 1125.4,320.5 1107.7,312.6" fill="#ffff00"/>
<path d="M1119.5 296.0L1120.5 312.6M1120.5 312.6L1135.2 320.5M1135.2 320.5L1145.0 332.3M1145.0 332.3L1158.7 342.1M1158.7 342.1L1162.6 349.9M1162.6 349.9L1158.7 363.6M1158.7 363.6L1147.0 359.7M1147.0 359.7L1131.3 355.8M1131.3 355.8L1125.4 349.9M1125.4 349.9L1125.4 320.5M1125.4 320.5L1107.7 312.6M1107.7 312.6L1099.9 296.0" fill="none" stroke="#fff" stroke-opacity="0.3" stroke-width="0.6"/>
<polygon points="1194.0,296.0 1213.6,296.0 1222.5,308.7 1223.4,324.4 1217.5,312.6 1201.9,306.8" fill="#ffff00"/>
<path d="M1213.6 296.0L1222.5 308.7M1222.5 308.7L1223.4 324.4M1223.4 324.4L1217.5 312.6M1217.5 312.6L1201.9 306.8M1201.9 306.8L1194.0 296.0" fill="none" stroke="#fff" stroke-opacity="0.3" stroke-width="0.6"/>
<polygon points="1211.7,296.0 1223.4,296.0 1223.4,306.8" fill="#c8dc00"/>
<path d="M1223.4 296.0L1223.4 306.8M1223.4 306.8L1211.7 296.0" fill="none" stroke="#fff" stroke-opacity="0.3" stroke-width="0.6"/>
<polygon points="1227.4,296.0 1235.2,296.0 1235.2,328.3 1229.3,312.6" fill="#c8dc00"/>
<path d="M1235.2 328.3L1229.3 312.6M1229.3 312.6L1227.4 296.0" fill="none" stroke="#fff" stroke-opacity="0.3" stroke-width="0.6"/>
<polygon points="1227.4,312.6 1235.2,328.3 1235.2,336.2 1228.3,332.3" fill="#ffff00"/>
<path d="M1227.4 312.6L1235.2 328.3M1235.2 336.2L1228.3 332.3M1228.3 332.3L1227.4 312.6" fill="none" stroke="#fff" stroke-opacity="0.3" stroke-width="0.6"/>
<polygon points="1194.0,322.5 1205.8,316.6 1212.6,322.5 1213.6,328.3 1207.7,334.2 1201.9,330.3" fill="#ffbf00"/>
<path d="M1194.0 322.5L1205.8 316.6M1205.8 316.6L1212.6 322.5M1212.6 322.5L1213.6 328.3M1213.6 328.3L1207.7 334.2M1207.7 334.2L1201.9 330.3M1201.9 330.3L1194.0 322.5" fill="none" stroke="#fff" stroke-opacity="0.3" stroke-width="0.6"/>
<polygon points="1076.4,365.6 1081.3,361.7 1090.1,374.4 1082.3,382.3 1077.4,375.4" fill="#ffbf00"/>
<path d="M1076.4 365.6L1081.3 361.7M1081.3 361.7L1090.1 374.4M1090.1 374.4L1082.3 382.3M1082.3 382.3L1077.4 375.4M1077.4 375.4L1076.4 365.6" fill="none" stroke="#fff" stroke-opacity="0.3" stroke-width="0.6"/>
<polygon points="1055.2,312.6 1062.6,316.6 1062.6,332.3 1055.2,330.3" fill="#ffff00"/>
<path d="M1055.2 312.6L1062.6 316.6M1062.6 316.6L1062.6 332.3M1062.6 332.3L1055.2 330.3" fill="none" stroke="#fff" stroke-opacity="0.3" stroke-width="0.6"/>
<polygon points="1055.2,340.1 1062.6,338.1 1070.5,349.9 1062.6,355.8 1055.2,355.8" fill="#ffbf00"/>
<path d="M1055.2 340.1L1062.6 338.1M1062.6 338.1L1070.5 349.9M1070.5 349.9L1062.6 355.8M1062.6 355.8L1055.2 355.8" fill="none" stroke="#fff" stroke-opacity="0.3" stroke-width="0.6"/>
<polygon points="1055.2,365.6 1062.6,363.6 1062.6,399.9 1055.2,399.9" fill="#ffff00"/>
<path d="M1055.2 365.6L1062.6 363.6M1062.6 363.6L1062.6 399.9" fill="none" stroke="#fff" stroke-opacity="0.3" stroke-width="0.6"/>
<polygon points="1227.4,340.1 1234.8,342.1 1234.8,351.9 1227.4,351.9" fill="#ffbf00"/>
<path d="M1227.4 340.1L1234.8 342.1M1234.8 351.9L1227.4 351.9M1227.4 351.9L1227.4 340.1" fill="none" stroke="#fff" stroke-opacity="0.3" stroke-width="0.6"/>
<polygon points="1227.4,363.6 1234.8,365.6 1234.8,399.9 1227.4,399.9" fill="#ffff00"/>
<path d="M1227.4 363.6L1234.8 365.6M1227.4 399.9L1227.4 363.6" fill="none" stroke="#fff" stroke-opacity="0.3" stroke-width="0.6"/>
<polygon points="1055.1,408.1 1060.1,408.1 1069.1,418.1 1071.1,434.2 1065.1,440.3 1055.1,438.2" fill="#ffff00"/>
<path d="M1055.1 408.1L1060.1 408.1M1060.1 408.1L1069.1 418.1M1069.1 418.1L1071.1 434.2M1071.1 434.2L1065.1 440.3M1065.1 440.3L1055.1 438.2" fill="none" stroke="#fff" stroke-opacity="0.3" stroke-width="0.6"/>
<polygon points="1055.1,424.2 1060.1,428.2 1059.1,436.2 1055.1,435.2" fill="#c8dc00"/>
<path d="M1055.1 424.2L1060.1 428.2M1060.1 428.2L1059.1 436.2M1059.1 436.2L1055.1 435.2" fill="none" stroke="#fff" stroke-opacity="0.3" stroke-width="0.6"/>
<polygon points="1221.9,410.1 1234.9,410.1 1234.9,450.3 1225.9,446.3 1219.9,430.2" fill="#ffff00"/>
<path d="M1221.9 410.1L1234.9 410.1M1234.9 450.3L1225.9 446.3M1225.9 446.3L1219.9 430.2M1219.9 430.2L1221.9 410.1" fill="none" stroke="#fff" stroke-opacity="0.3" stroke-width="0.6"/>
<polygon points="1055.1,466.4 1060.1,464.4 1061.1,484.5 1055.1,490.5" fill="#ffff00"/>
<path d="M1055.1 466.4L1060.1 464.4M1060.1 464.4L1061.1 484.5M1061.1 484.5L1055.1 490.5" fill="none" stroke="#fff" stroke-opacity="0.3" stroke-width="0.6"/>
<polygon points="1055.1,444.3 1068.1,440.3 1081.2,436.2 1097.3,442.3 1107.3,454.3 1119.4,443.3 1135.5,435.2 1157.6,432.2 1185.7,438.2 1197.8,448.3 1217.9,450.3 1234.9,456.3 1234.9,600.1 1056.1,600.1 1056.1,510.6" fill="#ffbf00"/>
<path d="M1055.1 444.3L1068.1 440.3M1068.1 440.3L1081.2 436.2M1081.2 436.2L1097.3 442.3M1097.3 442.3L1107.3 454.3M1107.3 454.3L1119.4 443.3M1119.4 443.3L1135.5 435.2M1135.5 435.2L1157.6 432.2M1157.6 432.2L1185.7 438.2M1185.7 438.2L1197.8 448.3M1197.8 448.3L1217.9 450.3M1217.9 450.3L1234.9 456.3" fill="none" stroke="#fff" stroke-opacity="0.3" stroke-width="0.6"/>
<polygon points="1081.2,510.6 1105.3,501.6 1135.5,496.5 1161.6,499.5 1165.6,510.6 1163.6,520.7 1135.5,518.6 1105.3,518.6 1093.2,512.6" fill="#ffff00"/>
<path d="M1081.2 510.6L1105.3 501.6M1105.3 501.6L1135.5 496.5M1135.5 496.5L1161.6 499.5M1161.6 499.5L1165.6 510.6M1165.6 510.6L1163.6 520.7M1163.6 520.7L1135.5 518.6M1135.5 518.6L1105.3 518.6M1105.3 518.6L1093.2 512.6M1093.2 512.6L1081.2 510.6" fill="none" stroke="#fff" stroke-opacity="0.3" stroke-width="0.6"/>
<polygon points="1099.3,530.7 1129.4,528.7 1157.6,526.7 1169.6,534.7 1165.6,546.8 1139.5,548.8 1105.3,546.8 1099.3,538.7" fill="#ffff00"/>
<path d="M1099.3 530.7L1129.4 528.7M1129.4 528.7L1157.6 526.7M1157.6 526.7L1169.6 534.7M1169.6 534.7L1165.6 546.8M1165.6 546.8L1139.5 548.8M1139.5 548.8L1105.3 546.8M1105.3 546.8L1099.3 538.7M1099.3 538.7L1099.3 530.7" fill="none" stroke="#fff" stroke-opacity="0.3" stroke-width="0.6"/>
<polygon points="1095.3,560.9 1115.4,570.9 1157.6,564.9 1185.7,566.9 1189.7,583.0 1193.7,600.1 1071.1,600.1 1073.1,583.0 1091.2,570.9" fill="#ffff00"/>
<path d="M1095.3 560.9L1115.4 570.9M1115.4 570.9L1157.6 564.9M1157.6 564.9L1185.7 566.9M1185.7 566.9L1189.7 583.0M1189.7 583.0L1193.7 600.1M1071.1 600.1L1073.1 583.0M1073.1 583.0L1091.2 570.9M1091.2 570.9L1095.3 560.9" fill="none" stroke="#fff" stroke-opacity="0.3" stroke-width="0.6"/>
<polygon points="1071.1,504.6 1081.2,502.6 1105.3,494.5 1135.5,490.5 1169.6,494.5 1173.6,514.6 1165.6,522.7 1171.6,528.7 1175.7,550.8 1191.7,560.9 1197.8,589.0 1157.6,600.1 1085.2,600.1 1073.1,587.0 1093.2,554.8 1075.2,546.8 1071.1,520.7" fill="#ffdd00"/>
<path d="M1071.1 504.6L1081.2 502.6M1081.2 502.6L1105.3 494.5M1105.3 494.5L1135.5 490.5M1135.5 490.5L1169.6 494.5M1169.6 494.5L1173.6 514.6M1173.6 514.6L1165.6 522.7M1165.6 522.7L1171.6 528.7M1171.6 528.7L1175.7 550.8M1175.7 550.8L1191.7 560.9M1191.7 560.9L1197.8 589.0M1085.2 600.1L1073.1 587.0M1073.1 587.0L1093.2 554.8M1093.2 554.8L1075.2 546.8M1075.2 546.8L1071.1 520.7M1071.1 520.7L1071.1 504.6" fill="none" stroke="#fff" stroke-opacity="0.3" stroke-width="0.6"/>
<polygon points="1083.2,510.6 1105.3,502.6 1135.5,497.5 1161.6,500.6 1165.6,510.6 1163.6,519.6 1135.5,518.6 1105.3,518.6 1093.2,513.6" fill="#ffff00"/>
<path d="M1083.2 510.6L1105.3 502.6M1105.3 502.6L1135.5 497.5M1135.5 497.5L1161.6 500.6M1161.6 500.6L1165.6 510.6M1165.6 510.6L1163.6 519.6M1163.6 519.6L1135.5 518.6M1135.5 518.6L1105.3 518.6M1105.3 518.6L1093.2 513.6M1093.2 513.6L1083.2 510.6" fill="none" stroke="#fff" stroke-opacity="0.3" stroke-width="0.6"/>
<polygon points="1099.3,530.7 1129.4,528.7 1157.6,526.7 1169.6,534.7 1165.6,546.8 1139.5,548.8 1105.3,546.8 1099.3,538.7" fill="#ffff00"/>
<path d="M1099.3 530.7L1129.4 528.7M1129.4 528.7L1157.6 526.7M1157.6 526.7L1169.6 534.7M1169.6 534.7L1165.6 546.8M1165.6 546.8L1139.5 548.8M1139.5 548.8L1105.3 546.8M1105.3 546.8L1099.3 538.7M1099.3 538.7L1099.3 530.7" fill="none" stroke="#fff" stroke-opacity="0.3" stroke-width="0.6"/>
<polygon points="1095.3,560.9 1115.4,570.9 1157.6,564.9 1185.7,566.9 1189.7,583.0 1193.7,600.1 1071.1,600.1 1073.1,583.0 1091.2,570.9" fill="#ffff00"/>
<path d="M1095.3 560.9L1115.4 570.9M1115.4 570.9L1157.6 564.9M1157.6 564.9L1185.7 566.9M1185.7 566.9L1189.7 583.0M1189.7 583.0L1193.7 600.1M1071.1 600.1L1073.1 583.0M1073.1 583.0L1091.2 570.9M1091.2 570.9L1095.3 560.9" fill="none" stroke="#fff" stroke-opacity="0.3" stroke-width="0.6"/>
<polygon points="1069.1,530.7 1081.2,528.7 1089.2,538.7 1081.2,546.8 1069.1,542.8" fill="#ffbf00"/>
<path d="M1069.1 530.7L1081.2 528.7M1081.2 528.7L1089.2 538.7M1089.2 538.7L1081.2 546.8M1081.2 546.8L1069.1 542.8M1069.1 542.8L1069.1 530.7" fill="none" stroke="#fff" stroke-opacity="0.3" stroke-width="0.6"/>
<polygon points="1071.1,532.7 1079.2,530.7 1084.2,537.7 1078.2,541.8 1071.1,539.7" fill="#ffa600"/>
<path d="M1071.1 532.7L1079.2 530.7M1079.2 530.7L1084.2 537.7M1084.2 537.7L1078.2 541.8M1078.2 541.8L1071.1 539.7M1071.1 539.7L1071.1 532.7" fill="none" stroke="#fff" stroke-opacity="0.3" stroke-width="0.6"/>
<polygon points="1129.4,482.5 1139.5,468.4 1149.5,450.3 1173.6,448.3 1185.7,456.3 1197.8,454.3 1221.9,458.3 1234.9,474.4 1234.9,600.1 1217.9,591.0 1209.8,570.9 1197.8,554.8 1185.7,534.7 1173.6,510.6 1169.6,494.5 1153.5,486.5 1145.5,484.5" fill="#ffa600"/>
<path d="M1129.4 482.5L1139.5 468.4M1139.5 468.4L1149.5 450.3M1149.5 450.3L1173.6 448.3M1173.6 448.3L1185.7 456.3M1185.7 456.3L1197.8 454.3M1197.8 454.3L1221.9 458.3M1221.9 458.3L1234.9 474.4M1217.9 591.0L1209.8 570.9M1209.8 570.9L1197.8 554.8M1197.8 554.8L1185.7 534.7M1185.7 534.7L1173.6 510.6M1173.6 510.6L1169.6 494.5M1169.6 494.5L1153.5 486.5M1153.5 486.5L1145.5 484.5M1145.5 484.5L1129.4 482.5" fill="none" stroke="#fff" stroke-opacity="0.3" stroke-width="0.6"/>
<polygon points="1071.1,468.4 1085.2,456.3 1097.3,470.4 1099.3,486.5 1085.2,502.6 1071.1,490.5" fill="#ffa600"/>
<path d="M1071.1 468.4L1085.2 456.3M1085.2 456.3L1097.3 470.4M1097.3 470.4L1099.3 486.5M1099.3 486.5L1085.2 502.6M1085.2 502.6L1071.1 490.5M1071.1 490.5L1071.1 468.4" fill="none" stroke="#fff" stroke-opacity="0.3" stroke-width="0.6"/>
<polygon points="1075.2,474.4 1084.2,466.4 1093.2,478.4 1091.2,490.5 1081.2,494.5 1075.2,486.5" fill="#ff8000"/>
<path d="M1075.2 474.4L1084.2 466.4M1084.2 466.4L1093.2 478.4M1093.2 478.4L1091.2 490.5M1091.2 490.5L1081.2 494.5M1081.2 494.5L1075.2 486.5M1075.2 486.5L1075.2 474.4" fill="none" stroke="#fff" stroke-opacity="0.3" stroke-width="0.6"/>
<polygon points="1079.2,480.5 1084.2,476.4 1088.2,484.5 1083.2,489.5 1079.2,486.5" fill="#ff5500"/>
<path d="M1079.2 480.5L1084.2 476.4M1084.2 476.4L1088.2 484.5M1088.2 484.5L1083.2 489.5M1083.2 489.5L1079.2 486.5M1079.2 486.5L1079.2 480.5" fill="none" stroke="#fff" stroke-opacity="0.3" stroke-width="0.6"/>
<polygon points="1173.6,466.4 1183.7,456.3 1197.8,464.4 1209.8,468.4 1221.9,474.4 1234.9,494.5 1234.9,591.0 1225.9,581.0 1217.9,556.8 1209.8,534.7 1201.8,520.7 1185.7,502.6 1173.6,484.5" fill="#ff8000"/>
<path d="M1173.6 466.4L1183.7 456.3M1183.7 456.3L1197.8 464.4M1197.8 464.4L1209.8 468.4M1209.8 468.4L1221.9 474.4M1221.9 474.4L1234.9 494.5M1234.9 591.0L1225.9 581.0M1225.9 581.0L1217.9 556.8M1217.9 556.8L1209.8 534.7M1209.8 534.7L1201.8 520.7M1201.8 520.7L1185.7 502.6M1185.7 502.6L1173.6 484.5M1173.6 484.5L1173.6 466.4" fill="none" stroke="#fff" stroke-opacity="0.3" stroke-width="0.6"/>
<polygon points="1185.7,474.4 1195.8,466.4 1207.8,468.4 1219.9,476.4 1234.9,502.6 1234.9,570.9 1226.9,566.9 1221.9,542.8 1213.8,526.7 1201.8,512.6 1189.7,496.5 1185.7,484.5" fill="#ff5500"/>
<path d="M1185.7 474.4L1195.8 466.4M1195.8 466.4L1207.8 468.4M1207.8 468.4L1219.9 476.4M1219.9 476.4L1234.9 502.6M1234.9 570.9L1226.9 566.9M1226.9 566.9L1221.9 542.8M1221.9 542.8L1213.8 526.7M1213.8 526.7L1201.8 512.6M1201.8 512.6L1189.7 496.5M1189.7 496.5L1185.7 484.5M1185.7 484.5L1185.7 474.4" fill="none" stroke="#fff" stroke-opacity="0.3" stroke-width="0.6"/>
<polygon points="1189.7,476.4 1199.8,468.4 1209.8,469.4 1221.9,480.5 1234.9,510.6 1234.9,566.9 1228.9,558.8 1223.9,534.7 1215.9,522.7 1203.8,510.6 1192.7,494.5 1188.7,484.5" fill="#ff2000"/>
<path d="M1189.7 476.4L1199.8 468.4M1199.8 468.4L1209.8 469.4M1209.8 469.4L1221.9 480.5M1221.9 480.5L1234.9 510.6M1234.9 566.9L1228.9 558.8M1228.9 558.8L1223.9 534.7M1223.9 534.7L1215.9 522.7M1215.9 522.7L1203.8 510.6M1203.8 510.6L1192.7 494.5M1192.7 494.5L1188.7 484.5M1188.7 484.5L1189.7 476.4" fill="none" stroke="#fff" stroke-opacity="0.3" stroke-width="0.6"/>
<polygon points="1194.7,476.4 1203.8,470.4 1213.8,472.4 1223.9,486.5 1234.9,518.6 1234.9,550.8 1229.9,542.8 1224.9,522.7 1213.8,510.6 1199.8,496.5 1193.7,486.5" fill="#ee0000"/>
<path d="M1194.7 476.4L1203.8 470.4M1203.8 470.4L1213.8 472.4M1213.8 472.4L1223.9 486.5M1223.9 486.5L1234.9 518.6M1234.9 550.8L1229.9 542.8M1229.9 542.8L1224.9 522.7M1224.9 522.7L1213.8 510.6M1213.8 510.6L1199.8 496.5M1199.8 496.5L1193.7 486.5M1193.7 486.5L1194.7 476.4" fill="none" stroke="#fff" stroke-opacity="0.3" stroke-width="0.6"/>
<polygon points="1198.8,478.4 1206.8,472.4 1214.8,475.4 1221.9,490.5 1219.9,498.5 1209.8,496.5 1200.8,488.5" fill="#c80000"/>
<path d="M1198.8 478.4L1206.8 472.4M1206.8 472.4L1214.8 475.4M1214.8 475.4L1221.9 490.5M1221.9 490.5L1219.9 498.5M1219.9 498.5L1209.8 496.5M1209.8 496.5L1200.8 488.5M1200.8 488.5L1198.8 478.4" fill="none" stroke="#fff" stroke-opacity="0.3" stroke-width="0.6"/>
<polygon points="1202.8,480.5 1208.8,475.4 1214.8,480.5 1216.9,490.5 1209.8,492.5 1203.8,486.5" fill="#a00000"/>
<path d="M1202.8 480.5L1208.8 475.4M1208.8 475.4L1214.8 480.5M1214.8 480.5L1216.9 490.5M1216.9 490.5L1209.8 492.5M1209.8 492.5L1203.8 486.5M1203.8 486.5L1202.8 480.5" fill="none" stroke="#fff" stroke-opacity="0.3" stroke-width="0.6"/>
<polygon points="1204.8,481.5 1209.8,478.4 1213.8,483.5 1212.8,489.5 1206.8,488.5" fill="#7a0000"/>
<path d="M1204.8 481.5L1209.8 478.4M1209.8 478.4L1213.8 483.5M1213.8 483.5L1212.8 489.5M1212.8 489.5L1206.8 488.5M1206.8 488.5L1204.8 481.5" fill="none" stroke="#fff" stroke-opacity="0.3" stroke-width="0.6"/>
<polygon points="1225.9,502.6 1234.9,510.6 1234.9,534.7 1227.9,522.7" fill="#c80000"/>
<path d="M1225.9 502.6L1234.9 510.6M1234.9 534.7L1227.9 522.7M1227.9 522.7L1225.9 502.6" fill="none" stroke="#fff" stroke-opacity="0.3" stroke-width="0.6"/>
<polygon points="1055.1,602.1 1234.9,602.1 1234.9,800.1 1055.1,800.1" fill="#ffff00"/>
<polygon points="1055.1,590.0 1067.1,590.0 1069.1,630.2 1075.2,656.3 1089.2,678.4 1103.3,694.5 1113.3,710.6 1121.4,730.7 1125.4,754.8 1123.4,800.1 1055.1,800.1" fill="#ffdd00"/>
<path d="M1067.1 590.0L1069.1 630.2M1069.1 630.2L1075.2 656.3M1075.2 656.3L1089.2 678.4M1089.2 678.4L1103.3 694.5M1103.3 694.5L1113.3 710.6M1113.3 710.6L1121.4 730.7M1121.4 730.7L1125.4 754.8M1125.4 754.8L1123.4 800.1" fill="none" stroke="#fff" stroke-opacity="0.3" stroke-width="0.6"/>
<polygon points="1055.1,590.0 1065.1,590.0 1066.1,630.2 1071.1,650.3 1083.2,670.4 1095.3,686.5 1105.3,702.6 1113.3,730.7 1111.3,760.9 1091.2,800.1 1055.1,800.1" fill="#ffbf00"/>
<path d="M1065.1 590.0L1066.1 630.2M1066.1 630.2L1071.1 650.3M1071.1 650.3L1083.2 670.4M1083.2 670.4L1095.3 686.5M1095.3 686.5L1105.3 702.6M1105.3 702.6L1113.3 730.7M1113.3 730.7L1111.3 760.9M1111.3 760.9L1091.2 800.1" fill="none" stroke="#fff" stroke-opacity="0.3" stroke-width="0.6"/>
<polygon points="1055.1,590.0 1063.1,590.0 1065.1,626.2 1069.1,650.3 1079.2,670.4 1089.2,690.5 1097.3,710.6 1099.3,730.7 1093.2,750.8 1075.2,766.9 1056.1,766.9" fill="#ffa600"/>
<path d="M1063.1 590.0L1065.1 626.2M1065.1 626.2L1069.1 650.3M1069.1 650.3L1079.2 670.4M1079.2 670.4L1089.2 690.5M1089.2 690.5L1097.3 710.6M1097.3 710.6L1099.3 730.7M1099.3 730.7L1093.2 750.8M1093.2 750.8L1075.2 766.9M1075.2 766.9L1056.1 766.9" fill="none" stroke="#fff" stroke-opacity="0.3" stroke-width="0.6"/>
<polygon points="1055.1,626.2 1063.1,636.2 1071.1,662.4 1081.2,684.5 1087.2,710.6 1077.2,746.8 1056.1,750.8" fill="#ff8000"/>
<path d="M1055.1 626.2L1063.1 636.2M1063.1 636.2L1071.1 662.4M1071.1 662.4L1081.2 684.5M1081.2 684.5L1087.2 710.6M1087.2 710.6L1077.2 746.8M1077.2 746.8L1056.1 750.8" fill="none" stroke="#fff" stroke-opacity="0.3" stroke-width="0.6"/>
<polygon points="1055.1,636.2 1065.1,642.3 1075.2,666.4 1080.2,686.5 1079.2,714.6 1069.1,738.7 1056.1,738.7" fill="#ff5500"/>
<path d="M1055.1 636.2L1065.1 642.3M1065.1 642.3L1075.2 666.4M1075.2 666.4L1080.2 686.5M1080.2 686.5L1079.2 714.6M1079.2 714.6L1069.1 738.7M1069.1 738.7L1056.1 738.7" fill="none" stroke="#fff" stroke-opacity="0.3" stroke-width="0.6"/>
<polygon points="1055.1,646.3 1061.1,648.3 1071.1,670.4 1075.2,690.5 1073.1,718.6 1065.1,734.7 1056.1,734.7" fill="#ff2000"/>
<path d="M1055.1 646.3L1061.1 648.3M1061.1 648.3L1071.1 670.4M1071.1 670.4L1075.2 690.5M1075.2 690.5L1073.1 718.6M1073.1 718.6L1065.1 734.7M1065.1 734.7L1056.1 734.7" fill="none" stroke="#fff" stroke-opacity="0.3" stroke-width="0.6"/>
<polygon points="1055.1,656.3 1065.1,674.4 1069.1,690.5 1068.1,714.6 1059.1,732.7 1056.1,730.7" fill="#ee0000"/>
<path d="M1055.1 656.3L1065.1 674.4M1065.1 674.4L1069.1 690.5M1069.1 690.5L1068.1 714.6M1068.1 714.6L1059.1 732.7M1059.1 732.7L1056.1 730.7" fill="none" stroke="#fff" stroke-opacity="0.3" stroke-width="0.6"/>
<polygon points="1079.2,590.0 1085.2,590.0 1099.3,616.1 1085.2,642.3 1080.2,630.2" fill="#c8dc00"/>
<path d="M1085.2 590.0L1099.3 616.1M1099.3 616.1L1085.2 642.3M1085.2 642.3L1080.2 630.2M1080.2 630.2L1079.2 590.0" fill="none" stroke="#fff" stroke-opacity="0.3" stroke-width="0.6"/>
<polygon points="1236.0,610.1 1234.9,616.1 1221.9,640.3 1205.8,656.3 1185.7,670.4 1153.5,694.5 1149.5,718.6 1165.6,746.8 1177.7,774.9 1183.7,800.1 1234.9,800.1" fill="#c8dc00"/>
<path d="M1234.9 616.1L1221.9 640.3M1221.9 640.3L1205.8 656.3M1205.8 656.3L1185.7 670.4M1185.7 670.4L1153.5 694.5M1153.5 694.5L1149.5 718.6M1149.5 718.6L1165.6 746.8M1165.6 746.8L1177.7 774.9M1177.7 774.9L1183.7 800.1" fill="none" stroke="#fff" stroke-opacity="0.3" stroke-width="0.6"/>
<polygon points="1055.1,780.0 1234.9,780.0 1234.9,884.5 1055.1,884.5" fill="#ffff00"/>
<polygon points="1055.1,780.0 1121.4,780.0 1113.3,794.1 1101.3,804.1 1087.2,812.2 1055.1,810.2" fill="#ffdd00"/>
<path d="M1121.4 780.0L1113.3 794.1M1113.3 794.1L1101.3 804.1M1101.3 804.1L1087.2 812.2M1087.2 812.2L1055.1 810.2" fill="none" stroke="#fff" stroke-opacity="0.3" stroke-width="0.6"/>
<polygon points="1183.7,780.0 1189.7,804.1 1207.8,828.2 1211.8,856.4 1212.8,884.5 1234.9,884.5 1234.9,780.0" fill="#c8dc00"/>
<path d="M1183.7 780.0L1189.7 804.1M1189.7 804.1L1207.8 828.2M1207.8 828.2L1211.8 856.4M1211.8 856.4L1212.8 884.5" fill="none" stroke="#fff" stroke-opacity="0.3" stroke-width="0.6"/>
<polygon points="1055.1,866.4 1063.1,874.5 1063.1,884.5 1055.1,884.5" fill="#c8dc00"/>
<path d="M1055.1 866.4L1063.1 874.5M1063.1 874.5L1063.1 884.5" fill="none" stroke="#fff" stroke-opacity="0.3" stroke-width="0.6"/>
<polygon points="926.6,512.1 1055.8,512.1 1055.8,697.3 926.6,666.8" fill="#c8dc00"/>
<polygon points="935.0,512.1 1055.8,512.1 1055.8,697.3 1009.7,687.8 999.2,679.4 973.9,658.4 957.1,633.1 948.7,607.8 940.3,578.4 936.0,542.6" fill="#ffff00"/>
<path d="M1055.8 697.3L1009.7 687.8M1009.7 687.8L999.2 679.4M999.2 679.4L973.9 658.4M973.9 658.4L957.1 633.1M957.1 633.1L948.7 607.8M948.7 607.8L940.3 578.4M940.3 578.4L936.0 542.6M936.0 542.6L935.0 512.1" fill="none" stroke="#fff" stroke-opacity="0.3" stroke-width="0.6"/>
<polygon points="946.6,512.1 1055.8,512.1 1055.8,697.3 1028.6,689.9 1013.9,675.2 999.2,658.4 978.1,633.1 967.6,607.8 957.1,574.2 950.8,542.6" fill="#ffdd00"/>
<path d="M1055.8 697.3L1028.6 689.9M1028.6 689.9L1013.9 675.2M1013.9 675.2L999.2 658.4M999.2 658.4L978.1 633.1M978.1 633.1L967.6 607.8M967.6 607.8L957.1 574.2M957.1 574.2L950.8 542.6M950.8 542.6L946.6 512.1" fill="none" stroke="#fff" stroke-opacity="0.3" stroke-width="0.6"/>
<polygon points="963.4,512.1 1055.8,512.1 1055.8,697.3 1037.1,692.0 1024.4,675.2 1007.6,645.7 999.2,612.1 988.7,578.4 978.1,542.6" fill="#ffbf00"/>
<path d="M1055.8 697.3L1037.1 692.0M1037.1 692.0L1024.4 675.2M1024.4 675.2L1007.6 645.7M1007.6 645.7L999.2 612.1M999.2 612.1L988.7 578.4M988.7 578.4L978.1 542.6M978.1 542.6L963.4 512.1" fill="none" stroke="#fff" stroke-opacity="0.3" stroke-width="0.6"/>
<polygon points="971.8,512.1 1055.8,512.1 1049.7,536.3 1041.3,574.2 1049.7,616.3 1055.8,637.3 1055.8,697.3 1045.5,692.0 1032.8,671.0 1020.2,641.5 1009.7,607.8 999.2,580.5 986.5,544.7" fill="#ffa600"/>
<path d="M1055.8 512.1L1049.7 536.3M1049.7 536.3L1041.3 574.2M1041.3 574.2L1049.7 616.3M1049.7 616.3L1055.8 637.3M1055.8 697.3L1045.5 692.0M1045.5 692.0L1032.8 671.0M1032.8 671.0L1020.2 641.5M1020.2 641.5L1009.7 607.8M1009.7 607.8L999.2 580.5M999.2 580.5L986.5 544.7M986.5 544.7L971.8 512.1" fill="none" stroke="#fff" stroke-opacity="0.3" stroke-width="0.6"/>
<polygon points="976.0,512.1 1045.5,512.1 1044.4,542.6 1039.2,580.5 1041.3,607.8 1049.7,633.1 1055.8,645.7 1055.8,697.3 1045.5,687.8 1032.8,662.6 1022.3,637.3 1011.8,607.8 1001.3,580.5 988.7,546.8" fill="#ff8000"/>
<path d="M1045.5 512.1L1044.4 542.6M1044.4 542.6L1039.2 580.5M1039.2 580.5L1041.3 607.8M1041.3 607.8L1049.7 633.1M1049.7 633.1L1055.8 645.7M1055.8 697.3L1045.5 687.8M1045.5 687.8L1032.8 662.6M1032.8 662.6L1022.3 637.3M1022.3 637.3L1011.8 607.8M1011.8 607.8L1001.3 580.5M1001.3 580.5L988.7 546.8M988.7 546.8L976.0 512.1" fill="none" stroke="#fff" stroke-opacity="0.3" stroke-width="0.6"/>
<polygon points="977.1,512.1 1029.7,512.1 1033.9,532.1 1027.6,559.4 1021.3,582.6 1013.9,588.9 1004.4,580.5 989.7,546.8" fill="#ff5500"/>
<path d="M1029.7 512.1L1033.9 532.1M1033.9 532.1L1027.6 559.4M1027.6 559.4L1021.3 582.6M1021.3 582.6L1013.9 588.9M1013.9 588.9L1004.4 580.5M1004.4 580.5L989.7 546.8M989.7 546.8L977.1 512.1" fill="none" stroke="#fff" stroke-opacity="0.3" stroke-width="0.6"/>
<polygon points="978.1,513.1 1013.9,513.1 1016.0,532.1 1005.5,546.8 995.0,544.7 980.2,540.5" fill="#ff2000"/>
<path d="M1013.9 513.1L1016.0 532.1M1016.0 532.1L1005.5 546.8M1005.5 546.8L995.0 544.7M995.0 544.7L980.2 540.5M980.2 540.5L978.1 513.1" fill="none" stroke="#fff" stroke-opacity="0.3" stroke-width="0.6"/>
<polygon points="988.7,527.9 1003.4,532.1 1005.5,544.7 995.0,540.5" fill="#ff5500"/>
<path d="M988.7 527.9L1003.4 532.1M1003.4 532.1L1005.5 544.7M1005.5 544.7L995.0 540.5M995.0 540.5L988.7 527.9" fill="none" stroke="#fff" stroke-opacity="0.3" stroke-width="0.6"/>
<polygon points="1028.6,620.5 1041.3,633.1 1055.8,645.7 1055.8,697.3 1041.3,687.8 1032.8,666.8 1024.4,641.5" fill="#ff5500"/>
<path d="M1028.6 620.5L1041.3 633.1M1041.3 633.1L1055.8 645.7M1055.8 697.3L1041.3 687.8M1041.3 687.8L1032.8 666.8M1032.8 666.8L1024.4 641.5M1024.4 641.5L1028.6 620.5" fill="none" stroke="#fff" stroke-opacity="0.3" stroke-width="0.6"/>
<polygon points="1037.1,649.9 1049.7,658.4 1055.8,662.6 1055.8,697.3 1045.5,689.9 1037.1,671.0" fill="#ff2000"/>
<path d="M1037.1 649.9L1049.7 658.4M1049.7 658.4L1055.8 662.6M1055.8 697.3L1045.5 689.9M1045.5 689.9L1037.1 671.0M1037.1 671.0L1037.1 649.9" fill="none" stroke="#fff" stroke-opacity="0.3" stroke-width="0.6"/>
<polygon points="1045.5,671.0 1055.8,671.0 1055.8,698.3 1049.7,695.2" fill="#ee0000"/>
<path d="M1045.5 671.0L1055.8 671.0M1055.8 698.3L1049.7 695.2M1049.7 695.2L1045.5 671.0" fill="none" stroke="#fff" stroke-opacity="0.3" stroke-width="0.6"/>
<polygon points="1055.8,512.1 1066.5,512.1 1074.9,532.1 1068.6,553.1 1055.8,553.1" fill="#ffbf00"/>
<path d="M1066.5 512.1L1074.9 532.1M1074.9 532.1L1068.6 553.1M1068.6 553.1L1055.8 553.1" fill="none" stroke="#fff" stroke-opacity="0.3" stroke-width="0.6"/>
</g></defs>
  <clipPath id="rclip"><polygon points="1055,295 1235,295 1235,884 1055,884 1055,697 926,667 926,512 1055,512"/></clipPath>
  <use href="#contourR" clip-path="url(#rclip)"/>
  <path d="M1055 295 V206 H1235 V295 M1055 884 V974 H1235 V884" fill="none" stroke="#000" stroke-width="1.8"/>
  <path d="M1055 295 H1235 V884 H1055 V697 L926 667 V512 H1055 Z" fill="none" stroke="#333" stroke-width="0.8"/>
  <rect x="952.5" y="505" width="77.5" height="7" fill="#fff" stroke="#000080" stroke-width="1.6"/>
  <g stroke="#a2242c" fill="none">
   <path d="M1068 244 H1222 M1068 295.5 H1222 M1068 346 H1222 M1068 397.5 H1222 M1068 449 H1222 M1068 500 H1222 M1068 551.5 H1228 M1068 583 H1222 M1068 602.5 H1222 M1068 654 H1222 M1068 705 H1222 M1068 756.5 H1222 M1068 807 H1222 M1068 858.5 H1222 M1068 910 H1222 M1068 962 H1222" stroke-width="2.3"/>
   <path d="M935 552 H1228 M935 583 H1068 M935 614 H1228 M935 644.5 H1228 M1017.5 523 V682 M1042.5 523 V688" stroke-width="2.3"/>
   <path d="M935 523 H1228" stroke-width="2"/>
   <path d="M1224.5 545 V535 Q1224.5 523 1212 523 H950 Q938 523 938 535 V648 Q938 660 950 663 L1113 699.5" stroke-width="4.5" stroke-linecap="round"/>
   <path d="M1066 204 V973 M1224.5 204 V973" stroke-width="4.6" stroke-linecap="round"/>
  </g>
  <circle cx="1234.6" cy="509.5" r="3" fill="#000"/>
  <text x="1235" y="507.5" font-family="Liberation Sans" font-size="11.2" fill="#000" stroke="#000" stroke-width="0.25">40.3 %</text>
  <circle cx="1234.6" cy="777.4" r="3" fill="#000"/>
  <text x="1235" y="775" font-family="Liberation Sans" font-size="11.2" fill="#000" stroke="#000" stroke-width="0.25">0.0 %</text>
 </svg>
</div>
<div class="a" style="left:0;top:1040px;width:1277px;height:5px;background:#1c1c1c"></div>
<div class="a" style="left:1028px;top:1040px;width:46px;height:5px;background:#4c4c4c"></div><div class="a" style="left:1074px;top:1040px;width:3px;height:5px;background:#6a6a6a"></div>
</body></html>
